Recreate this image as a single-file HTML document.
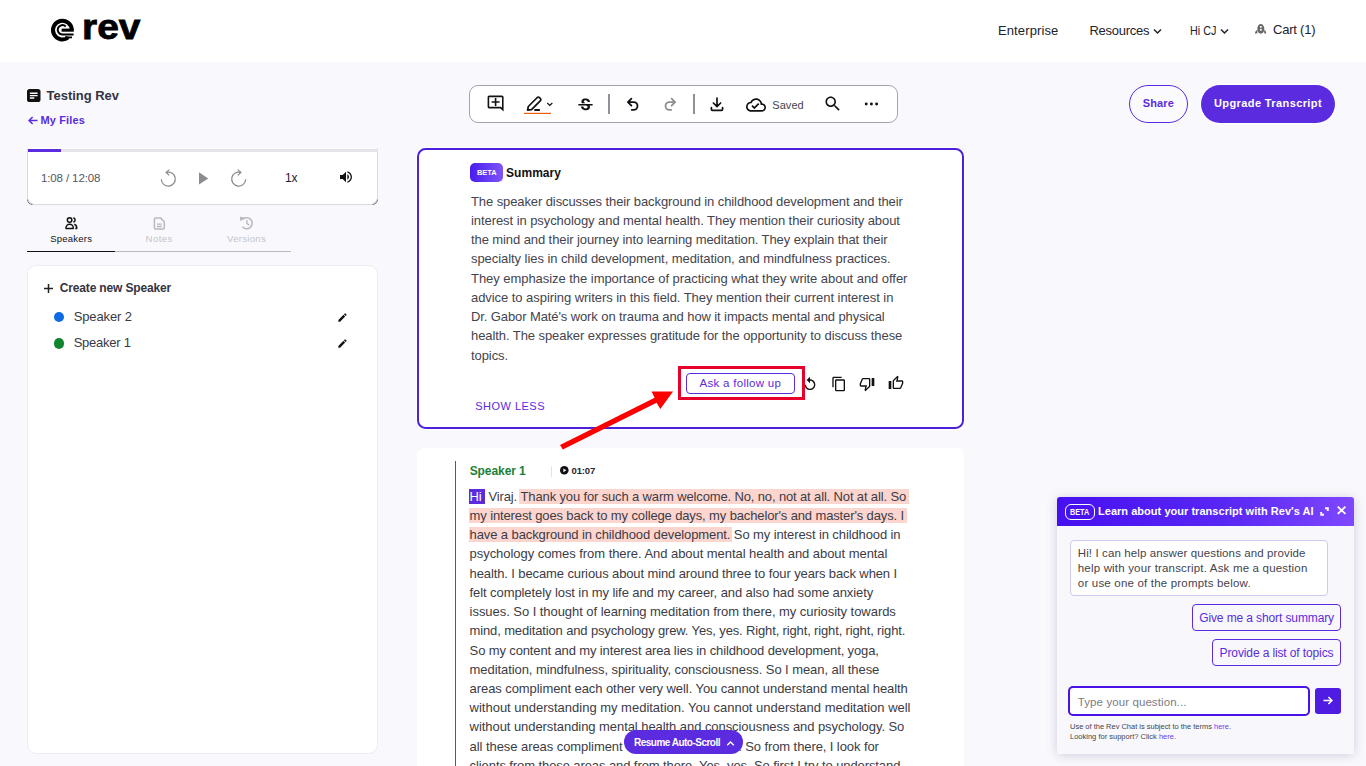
<!DOCTYPE html>
<html lang="en">
<head>
<meta charset="utf-8">
<title>Testing Rev - Rev Transcript Editor</title>
<style>
*{box-sizing:border-box;margin:0;padding:0}
html,body{width:1366px;height:766px;overflow:hidden}
body{background:#f9f9fd;font-family:"Liberation Sans",sans-serif;color:#1f1f2b;position:relative}
.a{position:absolute}
svg.a{overflow:visible}
.t{position:absolute;white-space:nowrap;line-height:1}
#hdr{left:0;top:0;width:1366px;height:62px;background:#fff}
#player{left:27px;top:148px;width:351px;height:57px;background:#fff;border:1px solid #d9d9e0;border-top:none;border-radius:0 0 8px 8px}
#bar{left:27.800px;top:148.500px;width:350.200px;height:3.500px;background:#e3e3e8}
#bar i{position:absolute;left:0;top:0;width:33.200px;height:3.500px;background:#5b2bdf}
#spk{left:27px;top:265px;width:351px;height:489px;background:#fff;border:1px solid #ececf2;border-radius:9px}
#tb{left:469px;top:85px;width:429px;height:38px;background:#fff;border:1px solid #a3a3ab;border-radius:9px}
#sum{left:417px;top:148px;width:547px;height:281px;background:#fff;border:2px solid #4d20dc;border-radius:8.500px;box-shadow:0 0 0 1px #fff}
#tr{left:417px;top:448px;width:547px;height:330px;background:#fff;border-radius:8px}
.hl{background:#fcd5ce;padding:0 1.5px;margin:0 -1.5px}
.hs{padding-left:.6px;margin-left:-.6px}
.he{padding-right:3px;margin-right:-3px}
.cur{background:#5b2bdf;color:#fff;padding:0 3.2px 0 .6px;margin:0 -3.2px 0 -.6px}
#chat{left:1057px;top:497px;width:297px;height:257px;background:#f8f8fc;border-radius:3px 3px 0 0;box-shadow:0 1px 12px rgba(40,30,90,.20)}
#chd{left:1057px;top:497px;width:297px;height:29px;border-radius:3px 3px 0 0;background:linear-gradient(90deg,#4710f0 0%,#5826f4 55%,#7f47ff 100%)}
.ob{border:1px solid #5b2bdf;border-radius:4px}
</style>
</head>
<body>
<div class="a" id="hdr"></div>
<!-- logo spiral -->
<svg class="a" style="left:50px;top:16.6px" width="26" height="26" viewBox="50 17 26 26">
<path d="M68.190 37.510A9.400 9.400 0 1 1 71.790 29.770" fill="none" stroke="#000" stroke-width="4"/>
<path d="M65.720 26.480A4.700 4.700 0 1 0 62.400 34.500H73.600" fill="none" stroke="#000" stroke-width="2"/>
<path d="M61.600 28.600H73.800V31.700H61.600Z" fill="#000"/>
<path d="M65 36.500H72V38.300H65Z" fill="#000"/>
</svg>
<!-- nav chevrons + cart icon -->
<svg class="a" style="left:1153px;top:28px" width="9" height="7" viewBox="0 0 9 7"><path d="M1 1.5L4.5 5L8 1.5" fill="none" stroke="#22222c" stroke-width="1.5"/></svg>
<svg class="a" style="left:1219.5px;top:28px" width="9" height="7" viewBox="0 0 9 7"><path d="M1 1.5L4.5 5L8 1.5" fill="none" stroke="#22222c" stroke-width="1.5"/></svg>
<svg class="a" style="left:1254px;top:23px" width="13" height="12" viewBox="1254 23 13 12"><ellipse cx="1260.800" cy="28.900" rx="3.500" ry="4.900" fill="#686868"/><rect x="1260" y="26" width="1.700" height="1.700" fill="#fff"/><rect x="1260" y="28.900" width="1.700" height="1.800" fill="#fff"/><path d="M1257.400 30C1255.600 30.600 1254.900 32 1255.100 33.700L1257.400 33.300ZM1264.200 30C1266 30.600 1266.300 32 1266.100 33.700L1264.200 33.300Z" fill="#686868"/></svg>

<!-- left column -->
<svg class="a" style="left:26.500px;top:89px" width="13.500" height="13" viewBox="0 0 13 13" preserveAspectRatio="none"><rect width="13" height="13" rx="2.6" fill="#111"/><path d="M2.8 4.2H10.2M2.8 6.6H10.2M2.8 9H7" stroke="#fff" stroke-width="1.4"/></svg>
<svg class="a" style="left:28px;top:115.5px" width="10" height="9" viewBox="0 0 10 9"><path d="M9.5 4.5H1.2M4.6 1L1.1 4.5L4.6 8" fill="none" stroke="#5b2bdf" stroke-width="1.5"/></svg>
<div class="a" id="player"></div>
<div class="a" id="bar"><i></i></div>
<svg class="a" style="left:27px;top:197px" width="351" height="8" viewBox="0 0 351 8"><path d="M0.500 2.500A5 5 0 0 0 5.500 7.500M350.500 2.500A5 5 0 0 1 345.500 7.500" fill="none" stroke="#77777d" stroke-width="1"/></svg>
<!-- player icons -->
<svg class="a" style="left:160px;top:168.5px" width="17" height="18" viewBox="0 0 17 18"><path d="M6.2 3.4A7 7 0 1 1 1.3 10.2" fill="none" stroke="#8a8a8e" stroke-width="1.2"/><path d="M9.3 0.6L6.1 3.4L9.3 6.4" fill="none" stroke="#8a8a8e" stroke-width="1.2"/></svg>
<svg class="a" style="left:199px;top:171.5px" width="10" height="13" viewBox="0 0 10 13"><path d="M0 0.2V12.6L9.2 6.4Z" fill="#8c8c90"/></svg>
<svg class="a" style="left:229.5px;top:168.5px" width="17" height="18" viewBox="0 0 17 18"><path d="M10.8 3.4A7 7 0 1 0 15.7 10.2" fill="none" stroke="#8a8a8e" stroke-width="1.2"/><path d="M7.7 0.6L10.9 3.4L7.7 6.4" fill="none" stroke="#8a8a8e" stroke-width="1.2"/></svg>
<svg class="a" style="left:338px;top:169px" width="16" height="16" viewBox="0 0 24 24"><path fill="#111" d="M3 9v6h4l5 5V4L7 9H3zm13.500 3c0-1.770-1.020-3.290-2.500-4.030v8.050c1.480-.730 2.500-2.250 2.500-4.020zM14 3.230v2.060c2.890.860 5 3.540 5 6.710s-2.110 5.850-5 6.710v2.060c4.010-.910 7-4.490 7-8.770s-2.990-7.860-7-8.770z"/></svg>
<!-- tabs -->
<svg class="a" style="left:64px;top:216px" width="15" height="15" viewBox="64 216 15 15"><g fill="none" stroke="#111" stroke-width="1.500" stroke-linejoin="round"><circle cx="69.600" cy="219.900" r="2.250"/><path d="M73.300 217.700A2.250 2.250 0 0 1 73.300 222.100"/><path d="M66 228.400V227.800A3.650 3.600 0 0 1 73.300 227.800V228.400Z"/><path d="M74.300 224.300C76 224.900 76.700 226.300 76.700 227.800V228.400H75.300"/></g></svg>
<svg class="a" style="left:152px;top:216px" width="15" height="15" viewBox="152 216 15 15"><g fill="none" stroke="#b9b9bd" stroke-width="1.500" stroke-linejoin="round"><path d="M155.400 217.900H160.500L164.300 221.700V227.900A1 1 0 0 1 163.300 228.900H155.400A1 1 0 0 1 154.400 227.900V218.900A1 1 0 0 1 155.400 217.900Z"/><path d="M157 224.200H161.800M157 226.500H161.800" stroke-width="1.300"/></g></svg>
<svg class="a" style="left:238px;top:215px" width="16" height="16" viewBox="238 215 16 16"><g fill="none" stroke="#b9b9bd" stroke-width="1.500"><path d="M242.600 219.500A5.500 5.500 0 1 1 242.300 226.600"/><path d="M246.900 219.900V223.500L249.300 225.100" stroke-width="1.400"/></g><path d="M239.800 216.800L244.600 217.500L240.500 221.600Z" fill="#b9b9bd"/></svg>
<div class="a" style="left:27px;top:251px;width:264px;height:1px;background:#b9b9be"></div>
<div class="a" style="left:27px;top:250.700px;width:88px;height:1.600px;background:#111"></div>
<div class="a" id="spk"></div>
<svg class="a" style="left:44px;top:283.500px" width="9" height="9" viewBox="0 0 9 9"><path d="M4.500 0V9M0 4.500H9" stroke="#222" stroke-width="1.500"/></svg>
<div class="a" style="left:54px;top:311.500px;width:10.400px;height:10.400px;border-radius:50%;background:#0e6be6"></div>
<div class="a" style="left:54px;top:338.400px;width:10.400px;height:10.400px;border-radius:50%;background:#12862f"></div>
<svg class="a" style="left:336.500px;top:311.500px" width="11" height="11" viewBox="0 0 24 24"><path fill="#111" d="M3 17.250V21h3.750L17.810 9.940l-3.750-3.750L3 17.250zM20.710 7.040c.390-.390.390-1.020 0-1.410l-2.340-2.340c-.390-.390-1.020-.390-1.410 0l-1.830 1.830 3.750 3.750 1.830-1.830z"/></svg>
<svg class="a" style="left:336.500px;top:337.600px" width="11" height="11" viewBox="0 0 24 24"><path fill="#111" d="M3 17.250V21h3.750L17.810 9.940l-3.750-3.750L3 17.250zM20.710 7.040c.390-.390.390-1.020 0-1.410l-2.340-2.340c-.390-.390-1.020-.390-1.410 0l-1.830 1.830 3.750 3.750 1.830-1.830z"/></svg>

<!-- toolbar -->
<div class="a" id="tb"></div>
<svg class="a" style="left:485.800px;top:94.400px" width="19.200" height="19.200" viewBox="0 0 24 24"><path fill="#111" d="M22 4c0-1.100-.900-2-2-2H4c-1.100 0-2 .900-2 2v12c0 1.100.900 2 2 2h14l4 4V4zm-2 13.170L18.830 16H4V4h16v13.170zM13 5h-2v4H7v2h4v4h2v-4h4V9h-4z"/></svg>
<svg class="a" style="left:524px;top:95px" width="30" height="20" viewBox="0 0 30 20"><path d="M3.600 15.200L4.300 11.500L13.300 2.500Q14.300 1.600 15.300 2.500L16.500 3.700Q17.400 4.700 16.500 5.700L7.500 14.700Z" fill="none" stroke="#111" stroke-width="1.700" stroke-linejoin="round"/><path d="M10.300 15H15.900" stroke="#111" stroke-width="2"/><path d="M0 18.400H27" stroke="#ec5f0e" stroke-width="1.200"/><path d="M23.300 8L25.800 10.500L28.300 8" fill="none" stroke="#111" stroke-width="1.200"/></svg>
<svg class="a" style="left:576px;top:95.500px" width="19" height="19" viewBox="0 0 24 24"><path fill="#111" d="M7.240 8.750c-.260-.480-.390-1.030-.390-1.670 0-.610.130-1.160.400-1.670.260-.500.630-.930 1.110-1.290.480-.350 1.050-.630 1.700-.830.660-.190 1.390-.290 2.180-.290.810 0 1.540.110 2.210.340.660.220 1.230.540 1.690.940.470.400.830.880 1.080 1.430.250.550.380 1.150.380 1.810h-3.010c0-.310-.050-.590-.150-.850-.090-.270-.240-.490-.440-.680-.200-.190-.450-.330-.750-.440-.300-.100-.660-.160-1.060-.160-.390 0-.740.040-1.030.13-.290.090-.530.210-.720.360-.190.160-.340.340-.440.550-.100.210-.150.430-.150.660 0 .480.250.880.740 1.210.380.250.770.480 1.410.700H7.390c-.050-.080-.110-.170-.150-.250zM21 12v-2H3v2h9.620c.180.070.400.140.550.200.370.170.660.340.870.510.210.170.350.360.430.570.070.200.110.430.110.690 0 .230-.050.450-.140.660-.090.200-.230.380-.420.530-.190.150-.420.260-.710.350-.290.080-.630.130-1.010.130-.430 0-.830-.040-1.180-.130s-.660-.230-.910-.420c-.250-.190-.450-.440-.590-.750-.140-.310-.250-.760-.250-1.210H6.400c0 .550.080 1.130.240 1.580.160.450.370.850.650 1.210.280.350.600.660.980.920.370.260.780.480 1.220.650.440.170.900.300 1.380.390.480.080.960.130 1.440.130.800 0 1.530-.090 2.180-.280s1.210-.450 1.670-.790c.460-.340.820-.770 1.070-1.270s.380-1.070.380-1.710c0-.600-.100-1.140-.310-1.610-.050-.110-.110-.230-.170-.330H21z"/></svg>
<div class="a" style="left:608.100px;top:94.200px;width:1.800px;height:19.400px;background:#909098"></div>
<svg class="a" style="left:625px;top:96px" width="16" height="17" viewBox="0 0 16 17"><path d="M6.400 2.600L2.900 6.100L6.400 9.600M3.300 6.100H8.600A3.900 3.900 0 0 1 8.600 13.900H6.800" fill="none" stroke="#111" stroke-width="1.800" stroke-linecap="round" stroke-linejoin="round"/></svg>
<svg class="a" style="left:661.800px;top:96px" width="16" height="17" viewBox="0 0 16 17"><path d="M9.600 2.600L13.100 6.100L9.600 9.600M12.700 6.100H7.400A3.900 3.900 0 0 0 7.400 13.900H9.200" fill="none" stroke="#8e8e90" stroke-width="1.800" stroke-linecap="round" stroke-linejoin="round"/></svg>
<div class="a" style="left:693.100px;top:94.200px;width:1.800px;height:19.400px;background:#909098"></div>
<svg class="a" style="left:709.200px;top:95.500px" width="16" height="16" viewBox="0 0 16 16"><path d="M8 2V10.400M4.400 7L8 10.600L11.600 7M2.400 11.600V13.300Q2.400 14.300 3.400 14.300H12.600Q13.600 14.300 13.600 13.300V11.600" fill="none" stroke="#111" stroke-width="1.700" stroke-linecap="round" stroke-linejoin="round"/></svg>
<svg class="a" style="left:746px;top:94.500px" width="20" height="20" viewBox="0 0 24 24"><path fill="#111" d="M19.350 10.040C18.670 6.590 15.640 4 12 4 9.110 4 6.600 5.640 5.350 8.040 2.340 8.360 0 10.910 0 14c0 3.310 2.690 6 6 6h13c2.760 0 5-2.240 5-5 0-2.640-2.050-4.780-4.650-4.960zM19 18H6c-2.210 0-4-1.790-4-4s1.790-4 4-4h.71C7.370 7.690 9.480 6 12 6c3.040 0 5.500 2.460 5.500 5.500v.5H19c1.660 0 3 1.340 3 3s-1.340 3-3 3zm-9-3.820l-2.090-2.090L6.500 13.500 10 17l6.010-6.010-1.410-1.410z"/></svg>
<svg class="a" style="left:823px;top:94.300px" width="19.500" height="19.500" viewBox="0 0 24 24"><path fill="#111" d="M15.500 14h-.790l-.280-.270C15.410 12.590 16 11.110 16 9.500 16 5.910 13.090 3 9.500 3S3 5.910 3 9.500 5.910 16 9.500 16c1.610 0 3.090-.590 4.230-1.570l.270.280v.790l5 4.990L20.490 19l-4.990-5zm-6 0C7.010 14 5 11.990 5 9.500S7.010 5 9.500 5 14 7.010 14 9.500 11.990 14 9.500 14z"/></svg>
<svg class="a" style="left:864px;top:102px" width="15" height="4" viewBox="0 0 15 4"><circle cx="2.200" cy="2" r="1.450" fill="#111"/><circle cx="7.400" cy="2" r="1.450" fill="#111"/><circle cx="12.600" cy="2" r="1.450" fill="#111"/></svg>

<!-- top-right buttons -->
<div class="a" style="left:1129px;top:85px;width:59px;height:38px;border:1.500px solid #5b2bdf;border-radius:19px;background:#fbfbff"></div>
<div class="a" style="left:1201px;top:85px;width:134px;height:38px;border-radius:19px;background:#5b2bdf;box-shadow:0 0 0 1px #fff"></div>

<!-- summary card -->
<div class="a" id="sum"></div>
<div class="a" style="left:470px;top:163px;width:33px;height:19px;border-radius:5px;background:linear-gradient(90deg,#4a1cf0,#7d55f6)"></div>
<div class="a ob" style="left:686px;top:373px;width:109px;height:21px;background:#fff"></div>
<svg class="a" style="left:802px;top:375.500px" width="16" height="16" viewBox="0 0 24 24"><path fill="#111" d="M12 5V1L7 6l5 5V7c3.310 0 6 2.690 6 6s-2.690 6-6 6-6-2.690-6-6H4c0 4.420 3.580 8 8 8s8-3.580 8-8-3.580-8-8-8z"/></svg>
<svg class="a" style="left:830.500px;top:375.500px" width="16" height="16" viewBox="0 0 24 24"><path fill="#111" d="M16 1H4c-1.100 0-2 .900-2 2v14h2V3h12V1zm3 4H8c-1.100 0-2 .900-2 2v14c0 1.100.900 2 2 2h11c1.100 0 2-.900 2-2V7c0-1.100-.900-2-2-2zm0 16H8V7h11v14z"/></svg>
<svg class="a" style="left:859px;top:375.500px" width="16" height="16" viewBox="0 0 24 24"><path fill="#111" d="M15 3H6c-.830 0-1.540.500-1.840 1.220l-3.020 7.050c-.090.230-.140.470-.140.730v2c0 1.100.900 2 2 2h6.310l-.950 4.570-.030.320c0 .410.170.790.440 1.060L9.830 23l6.590-6.590c.360-.360.580-.860.580-1.410V5c0-1.100-.900-2-2-2zm0 12l-4.340 4.340L12 14H3v-2l3-7h9v10zm4-12h4v12h-4z"/></svg>
<svg class="a" style="left:888px;top:375px" width="16" height="16" viewBox="0 0 24 24"><path fill="#111" d="M9 21h9c.830 0 1.540-.500 1.840-1.220l3.020-7.050c.090-.230.140-.470.140-.730v-2c0-1.100-.900-2-2-2h-6.310l.950-4.570.030-.320c0-.410-.170-.790-.440-1.060L14.170 1 7.580 7.590C7.220 7.950 7 8.450 7 9v10c0 1.100.900 2 2 2zM9 9l4.340-4.340L12 10h9v2l-3 7H9V9zM1 9h4v12H1z"/></svg>

<!-- transcript card -->
<div class="a" id="tr"></div>
<div class="a" style="left:454.600px;top:461px;width:1.500px;height:320px;background:#12862f"></div>
<div class="a" style="left:550.500px;top:466px;width:1px;height:11px;background:#e2e2ea"></div>
<svg class="a" style="left:559.600px;top:466.200px" width="8.600" height="8.600" viewBox="0 0 10 10"><circle cx="5" cy="5" r="5" fill="#111"/><path d="M3.900 2.800V7.200L7.300 5Z" fill="#fff"/></svg>

<!-- chat widget -->
<div class="a" id="chat"></div>
<div class="a" id="chd"></div>
<div class="a" style="left:1064.500px;top:503.500px;width:30px;height:16px;border:1px solid #fff;border-radius:6px"></div>
<svg class="a" style="left:1319.500px;top:506.500px" width="9" height="9" viewBox="0 0 9 9"><path d="M5 1.200H7.800V4M4 7.800H1.200V5" fill="none" stroke="#fff" stroke-width="1.900"/></svg>
<svg class="a" style="left:1337px;top:506.400px" width="9.200" height="8.600" viewBox="0 0 10 10" preserveAspectRatio="none"><path d="M0.800 0.800L9.200 9.200M9.200 0.800L0.800 9.200" stroke="#fff" stroke-width="2"/></svg>
<div class="a" style="left:1070px;top:539.500px;width:258px;height:56px;background:#fff;border:1px solid #cfc8f2;border-radius:4px"></div>
<div class="a ob" style="left:1192px;top:604px;width:149px;height:27px"></div>
<div class="a ob" style="left:1212px;top:639px;width:129px;height:27px"></div>
<div class="a" style="left:1068.400px;top:685.800px;width:241.200px;height:30px;background:#fff;border:2.700px solid #4a12e6;border-radius:5px"></div>
<div class="a" style="left:1315px;top:688px;width:26px;height:26px;background:#4f1de2;border-radius:3px"></div>
<svg class="a" style="left:1323px;top:695.500px" width="10" height="9" viewBox="0 0 10 9"><path d="M0.500 4.500H8.800M5.400 1L8.900 4.500L5.400 8" fill="none" stroke="#fff" stroke-width="1.500"/></svg>

<div class="t" style="left:997.90px;top:24px;font-size:13px;color:#22222c;letter-spacing:0.135px;">Enterprise</div>
<div class="t" style="left:1089.40px;top:24px;font-size:13px;color:#22222c;letter-spacing:-0.260px;">Resources</div>
<div class="t" style="left:1190.00px;top:24px;font-size:13px;color:#22222c;transform:scaleX(0.8307);transform-origin:0 0;">Hi CJ</div>
<div class="t" style="left:1273.00px;top:23px;font-size:13px;color:#22222c;letter-spacing:-0.220px;">Cart (1)</div>
<div class="t" style="left:82.00px;top:9px;font-size:35px;font-weight:700;color:#000;transform:scaleX(1.1111);transform-origin:0 0;-webkit-text-stroke:0.8px #000;">rev</div>
<div class="t" style="left:46.60px;top:89px;font-size:13px;font-weight:700;color:#34343e;letter-spacing:-0.029px;">Testing Rev</div>
<div class="t" style="left:40.50px;top:115px;font-size:11px;font-weight:700;color:#5b2bdf;letter-spacing:0.137px;">My Files</div>
<div class="t" style="left:41.00px;top:173px;font-size:11.5px;color:#56565f;letter-spacing:-0.121px;">1:08 / 12:08</div>
<div class="t" style="left:285.00px;top:172px;font-size:12px;color:#22222c;letter-spacing:-0.144px;">1x</div>
<div class="t" style="left:50.30px;top:234px;font-size:9.5px;color:#111;letter-spacing:0.207px;">Speakers</div>
<div class="t" style="left:145.60px;top:234px;font-size:9.5px;color:#c4c4c8;letter-spacing:0.454px;">Notes</div>
<div class="t" style="left:227.00px;top:234px;font-size:9.5px;color:#c4c4c8;letter-spacing:0.320px;">Versions</div>
<div class="t" style="left:59.80px;top:282px;font-size:12px;font-weight:700;color:#34343e;letter-spacing:-0.159px;">Create new Speaker</div>
<div class="t" style="left:73.70px;top:310px;font-size:13px;color:#3a3a44;letter-spacing:-0.130px;">Speaker 2</div>
<div class="t" style="left:73.70px;top:336px;font-size:13px;color:#3a3a44;letter-spacing:-0.252px;">Speaker 1</div>
<div class="t" style="left:772.30px;top:100px;font-size:11px;color:#44444e;letter-spacing:0.059px;">Saved</div>
<div class="t" style="left:1142.80px;top:98px;font-size:11px;font-weight:700;color:#5b2bdf;letter-spacing:0.124px;">Share</div>
<div class="t" style="left:1214.00px;top:98px;font-size:11px;font-weight:700;color:#fff;letter-spacing:0.397px;">Upgrade Transcript</div>
<div class="t" style="left:476.70px;top:169px;font-size:8px;font-weight:700;color:#fff;transform:scaleX(0.9298);transform-origin:0 0;">BETA</div>
<div class="t" style="left:506.00px;top:167px;font-size:12px;font-weight:700;color:#111;letter-spacing:0.042px;">Summary</div>
<div class="t" style="left:471.00px;top:195px;font-size:13px;color:#44444e;letter-spacing:-0.095px;">The speaker discusses their background in childhood development and their</div>
<div class="t" style="left:471.00px;top:214px;font-size:13px;color:#44444e;letter-spacing:-0.068px;">interest in psychology and mental health. They mention their curiosity about</div>
<div class="t" style="left:471.00px;top:233px;font-size:13px;color:#44444e;letter-spacing:-0.089px;">the mind and their journey into learning meditation. They explain that their</div>
<div class="t" style="left:471.00px;top:252px;font-size:13px;color:#44444e;letter-spacing:-0.062px;">specialty lies in child development, meditation, and mindfulness practices.</div>
<div class="t" style="left:471.00px;top:272px;font-size:13px;color:#44444e;letter-spacing:-0.046px;">They emphasize the importance of practicing what they write about and offer</div>
<div class="t" style="left:471.00px;top:291px;font-size:13px;color:#44444e;letter-spacing:-0.056px;">advice to aspiring writers in this field. They mention their current interest in</div>
<div class="t" style="left:471.00px;top:310px;font-size:13px;color:#44444e;letter-spacing:-0.103px;">Dr. Gabor Maté's work on trauma and how it impacts mental and physical</div>
<div class="t" style="left:471.00px;top:329px;font-size:13px;color:#44444e;letter-spacing:-0.075px;">health. The speaker expresses gratitude for the opportunity to discuss these</div>
<div class="t" style="left:471.00px;top:349px;font-size:13px;color:#44444e;letter-spacing:-0.083px;">topics.</div>
<div class="t" style="left:699.60px;top:378px;font-size:11.5px;color:#5b2bdf;letter-spacing:0.283px;">Ask a follow up</div>
<div class="t" style="left:475.20px;top:401px;font-size:11px;color:#5b2bdf;letter-spacing:0.488px;">SHOW LESS</div>
<div class="t" style="left:469.70px;top:465px;font-size:12px;font-weight:700;color:#1b7f37;letter-spacing:-0.080px;">Speaker 1</div>
<div class="t" style="left:571.50px;top:466px;font-size:9.5px;font-weight:700;color:#26262e;letter-spacing:-0.123px;">01:07</div>
<div class="t" style="left:469.60px;top:490px;font-size:13px;color:#3c3c46;letter-spacing:-0.142px;"><span class="cur">Hi</span><span style="color:#7a2a45">,</span> Viraj. <span class="hl he">Thank you for such a warm welcome. No, no, not at all. Not at all. So</span></div>
<div class="t" style="left:469.60px;top:509px;font-size:13px;color:#3c3c46;letter-spacing:-0.130px;"><span class="hl he hs">my interest goes back to my college days, my bachelor&#39;s and master&#39;s days. I</span></div>
<div class="t" style="left:469.60px;top:528px;font-size:13px;color:#3c3c46;letter-spacing:-0.105px;"><span class="hl hs">have a background in childhood development.</span> So my interest in childhood in</div>
<div class="t" style="left:469.60px;top:547px;font-size:13px;color:#3c3c46;letter-spacing:-0.051px;">psychology comes from there. And about mental health and about mental</div>
<div class="t" style="left:469.60px;top:567px;font-size:13px;color:#3c3c46;letter-spacing:-0.113px;">health. I became curious about mind around three to four years back when I</div>
<div class="t" style="left:469.60px;top:586px;font-size:13px;color:#3c3c46;letter-spacing:-0.085px;">felt completely lost in my life and my career, and also had some anxiety</div>
<div class="t" style="left:469.60px;top:605px;font-size:13px;color:#3c3c46;letter-spacing:-0.049px;">issues. So I thought of learning meditation from there, my curiosity towards</div>
<div class="t" style="left:469.60px;top:624px;font-size:13px;color:#3c3c46;letter-spacing:-0.143px;">mind, meditation and psychology grew. Yes, yes. Right, right, right, right, right.</div>
<div class="t" style="left:469.60px;top:644px;font-size:13px;color:#3c3c46;letter-spacing:-0.130px;">So my content and my interest area lies in childhood development, yoga,</div>
<div class="t" style="left:469.60px;top:663px;font-size:13px;color:#3c3c46;letter-spacing:-0.076px;">meditation, mindfulness, spirituality, consciousness. So I mean, all these</div>
<div class="t" style="left:469.60px;top:682px;font-size:13px;color:#3c3c46;letter-spacing:-0.075px;">areas compliment each other very well. You cannot understand mental health</div>
<div class="t" style="left:469.60px;top:701px;font-size:13px;color:#3c3c46;letter-spacing:-0.009px;">without understanding my meditation. You cannot understand meditation well</div>
<div class="t" style="left:469.60px;top:720px;font-size:13px;color:#3c3c46;letter-spacing:-0.062px;">without understanding mental health and consciousness and psychology. So</div>
<div class="t" style="left:469.60px;top:740px;font-size:13px;color:#3c3c46;letter-spacing:-0.063px;">all these areas compliment</div>
<div class="t" style="left:738.16px;top:740px;font-size:13px;color:#3c3c46;letter-spacing:-0.09px;">. So from there, I look for</div>
<div class="t" style="left:469.60px;top:759px;font-size:13px;color:#3c3c46;letter-spacing:-0.091px;">clients from these areas and from there. Yes, yes. So first I try to understand</div>
<div class="t" style="left:634.00px;top:738px;font-size:10px;font-weight:700;color:#fff;letter-spacing:-0.511px;z-index:5;">Resume Auto-Scroll</div>
<div class="t" style="left:1069.70px;top:508px;font-size:9px;font-weight:700;color:#fff;transform:scaleX(0.8052);transform-origin:0 0;">BETA</div>
<div class="t" style="left:1098.00px;top:506px;font-size:11px;font-weight:700;color:#fff;letter-spacing:0.031px;">Learn about your transcript with Rev&#39;s AI</div>
<div class="t" style="left:1077.80px;top:548px;font-size:11.5px;color:#44444e;letter-spacing:0.109px;">Hi! I can help answer questions and provide</div>
<div class="t" style="left:1077.80px;top:563px;font-size:11.5px;color:#44444e;letter-spacing:0.179px;">help with your transcript. Ask me a question</div>
<div class="t" style="left:1077.80px;top:578px;font-size:11.5px;color:#44444e;letter-spacing:0.192px;">or use one of the prompts below.</div>
<div class="t" style="left:1199.20px;top:612px;font-size:12px;color:#5b2bdf;letter-spacing:-0.112px;">Give me a short summary</div>
<div class="t" style="left:1219.60px;top:647px;font-size:12px;color:#5b2bdf;letter-spacing:-0.122px;">Provide a list of topics</div>
<div class="t" style="left:1077.80px;top:697px;font-size:11.5px;color:#7c7c86;letter-spacing:0.092px;">Type your question...</div>
<div class="t" style="left:1070.00px;top:723px;font-size:7.5px;color:#44444e;letter-spacing:-0.015px;">Use of the Rev Chat is subject to the terms <span style="color:#6a3df0">here</span>.</div>
<div class="t" style="left:1070.00px;top:733px;font-size:7.5px;color:#44444e;letter-spacing:0.003px;">Looking for support? Click <span style="color:#6a3df0">here</span>.</div>

<!-- overlays -->
<div class="a" style="left:624px;top:730px;width:119px;height:24px;border-radius:12px;background:#5b2bdf;z-index:4"></div>
<svg class="a" style="left:726px;top:739.500px;z-index:5" width="9" height="7" viewBox="0 0 9 7"><path d="M1.200 5.200L4.500 1.900L7.800 5.200" fill="none" stroke="#fff" stroke-width="1.400"/></svg>
<div class="a" style="left:678px;top:366px;width:127px;height:34px;border:3.500px solid #e8002c;z-index:3"></div>
<svg class="a" style="left:0;top:0;z-index:6" width="1366" height="766" viewBox="0 0 1366 766"><path d="M560 445L562.800 449.600L656.600 402.800L660.300 409L673.100 391.400L651.500 391.400L654.600 397.700Z" fill="#fe0000"/></svg>
</body>
</html>
